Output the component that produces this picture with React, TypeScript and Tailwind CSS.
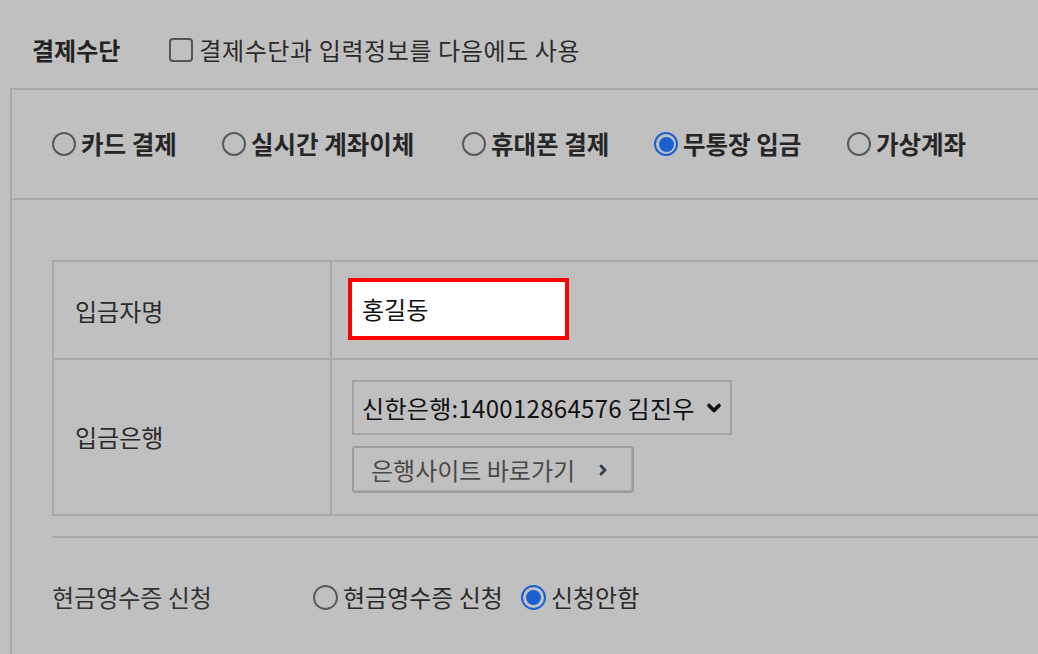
import { ChevronDown, ChevronRight } from "lucide-react";

const font = { fontFamily: '"Noto Sans CJK KR", "Noto Sans", sans-serif' };

function Radio({ checked, big }: { checked?: boolean; big?: boolean }) {
    return (
        <span
            className={
                "flex shrink-0 items-center justify-center rounded-full border-2 " +
                (big ? "h-[24px] w-[24px] " : "h-[25px] w-[25px] ") +
                (checked ? "border-[#1a5fd0]" : "border-[#5a5a5a]")
            }
        >
            {checked && <span className="h-[15px] w-[15px] rounded-full bg-[#1a5fd0]" />}
        </span>
    );
}

const methods = [
    { label: "카드 결제", w: "w-[170px]" },
    { label: "실시간 계좌이체", w: "w-[240px]" },
    { label: "휴대폰 결제", w: "w-[192px]" },
    { label: "무통장 입금", w: "w-[193px]", checked: true },
    { label: "가상계좌", w: "w-[160px]" },
];

export default function App() {
    return (
        <div className="h-[654px] w-[1038px] overflow-hidden bg-[#c0c0c0] text-[24px] text-[#2b2b2b]" style={font}>
            {/* header row */}
            <div className="mt-[34px] flex h-[32px] items-center pl-[32px]">
                <span className="font-bold text-[#222]">결제수단</span>
                <span className="ml-[49px] h-[24px] w-[24px] rounded-[4px] border-2 border-[#555]" />
                <span className="ml-[6px] tracking-[0.6px] text-[#2b2b2b]">결제수단과 입력정보를 다음에도 사용</span>
            </div>

            {/* outer box */}
            <div className="ml-[10px] mt-[22px] w-[1100px] border-l-2 border-t-2 border-[#a9a9a9]">
                <div className="flex h-[110px] items-center border-b-2 border-[#a9a9a9] pl-[40px]">
                    {methods.map((m) => (
                        <div key={m.label} className={"flex shrink-0 items-center gap-[5px] " + m.w}>
                            <Radio big checked={m.checked} />
                            <span className="text-[24.5px] font-bold text-[#262626]">{m.label}</span>
                        </div>
                    ))}
                </div>

                <div className="pl-[40px] pt-[60px]">
                    <div className="grid grid-cols-[278px_1fr] border-l-2 border-t-2 border-b-2 border-[#a9a9a9]">
                        <div className="flex h-[98px] items-center border-r-2 border-b-2 border-[#a9a9a9] pl-[21px] pt-[2px]">
                            입금자명
                        </div>
                        <div className="flex h-[98px] items-start border-b-2 border-[#a9a9a9] pl-[16px] pt-[16px]">
                            <div className="flex h-[62px] w-[221px] items-center border-4 border-[#ff0000] bg-white pl-[10px] text-[#111]">
                                홍길동
                            </div>
                        </div>
                        <div className="flex h-[154px] items-center border-r-2 border-[#a9a9a9] pl-[21px]">
                            입금은행
                        </div>
                        <div className="flex h-[154px] flex-col items-start gap-[11px] pl-[20px] pt-[20px]">
                            <div className="flex h-[55px] w-[380px] items-center justify-between border-2 border-[#a3a3a3] pl-[8px] pr-[6px] text-[#111]">
                                <span className="whitespace-nowrap tracking-[0.3px]">신한은행:140012864576 김진우</span>
                                <ChevronDown size={20} strokeWidth={4.5} className="shrink-0 text-[#111]" />
                            </div>
                            <div className="flex h-[47px] w-[282px] items-center gap-[20px] rounded-[3px] border-2 border-[#9c9c9c] pl-[17px] text-[#4a4a4a] shadow-[inset_-1px_-1px_0_#aaa]">
                                <span>은행사이트 바로가기</span>
                                <ChevronRight size={16} strokeWidth={4.5} className="text-[#3a4256]" />
                            </div>
                        </div>
                    </div>

                    <div className="mt-[20px] border-t-2 border-[#a9a9a9]" />

                    <div className="flex h-[118px] items-center">
                        <span className="w-[261px] text-[#333]">현금영수증 신청</span>
                        <div className="flex items-center gap-[5px]">
                            <Radio />
                            <span className="text-[#2b2b2b]">현금영수증 신청</span>
                        </div>
                        <div className="ml-[18px] flex items-center gap-[5px]">
                            <Radio checked />
                            <span className="text-[#2b2b2b]">신청안함</span>
                        </div>
                    </div>
                </div>
            </div>
        </div>
    );
}
